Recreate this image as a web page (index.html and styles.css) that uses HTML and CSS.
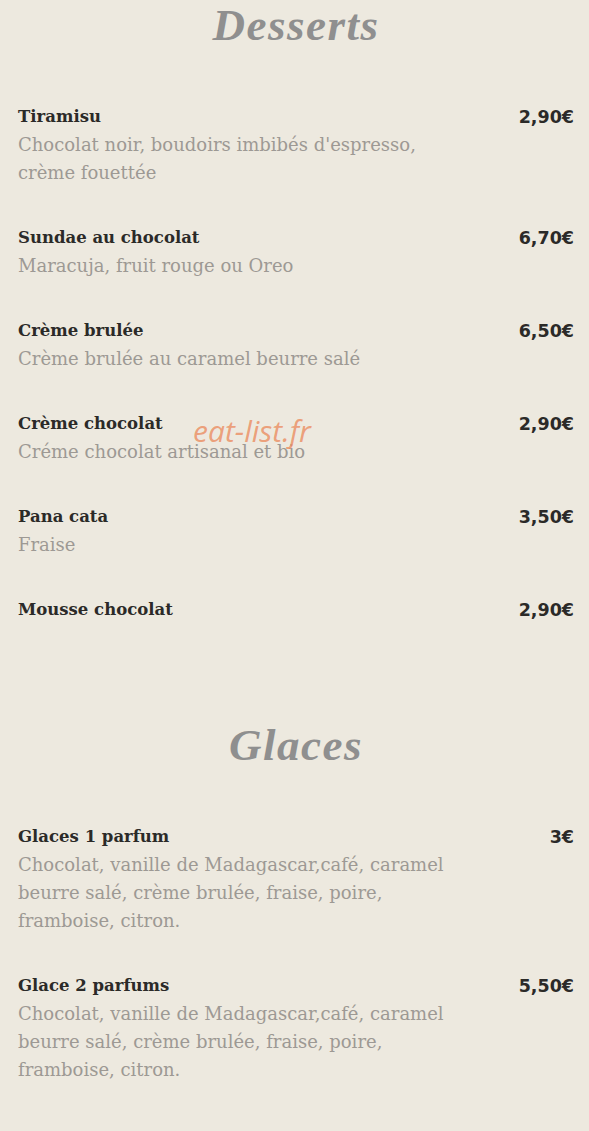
FILE: index.html
```html
<!DOCTYPE html>
<html lang="fr">
<head>
<meta charset="utf-8">
<title>Desserts</title>
<link rel="stylesheet" href="styles.css">
</head>
<body>
<div class="menu">
  <section class="section">
    <h2 class="section-title">Desserts</h2>
    <div class="items">
      <div class="item">
        <div class="item-text">
          <div class="item-name">Tiramisu</div>
          <div class="item-desc">Chocolat noir, boudoirs imbibés d'espresso, crème fouettée</div>
        </div>
        <div class="item-price">2,90€</div>
      </div>
      <div class="item">
        <div class="item-text">
          <div class="item-name">Sundae au chocolat</div>
          <div class="item-desc">Maracuja, fruit rouge ou Oreo</div>
        </div>
        <div class="item-price">6,70€</div>
      </div>
      <div class="item">
        <div class="item-text">
          <div class="item-name">Crème brulée</div>
          <div class="item-desc">Crème brulée au caramel beurre salé</div>
        </div>
        <div class="item-price">6,50€</div>
      </div>
      <div class="item">
        <div class="item-text">
          <div class="item-name">Crème chocolat</div>
          <div class="item-desc">Créme chocolat artisanal et bio</div>
        </div>
        <div class="item-price">2,90€</div>
        <div class="watermark">eat-list.fr</div>
      </div>
      <div class="item">
        <div class="item-text">
          <div class="item-name">Pana cata</div>
          <div class="item-desc">Fraise</div>
        </div>
        <div class="item-price">3,50€</div>
      </div>
      <div class="item">
        <div class="item-text">
          <div class="item-name">Mousse chocolat</div>
        </div>
        <div class="item-price">2,90€</div>
      </div>
    </div>
  </section>
  <section class="section">
    <h2 class="section-title">Glaces</h2>
    <div class="items">
      <div class="item">
        <div class="item-text">
          <div class="item-name">Glaces 1 parfum</div>
          <div class="item-desc">Chocolat, vanille de Madagascar,café, caramel beurre salé, crème brulée, fraise, poire, framboise, citron.</div>
        </div>
        <div class="item-price">3€</div>
      </div>
      <div class="item">
        <div class="item-text">
          <div class="item-name">Glace 2 parfums</div>
          <div class="item-desc">Chocolat, vanille de Madagascar,café, caramel beurre salé, crème brulée, fraise, poire, framboise, citron.</div>
        </div>
        <div class="item-price">5,50€</div>
      </div>
    </div>
  </section>
</div>
</body>
</html>
```
FILE: styles.css
```css
html, body {
  margin: 0;
  padding: 0;
  background: #ede9df;
}
.menu {
  padding: 0 15px 0 18px;
}
.section-title {
  margin: 0;
  text-align: center;
  font-family: "Liberation Serif", serif;
  font-style: italic;
  font-weight: bold;
  font-size: 45px;
  letter-spacing: 1.5px;
  line-height: 50px;
  color: #8f8f8f;
}
.items {
  display: flex;
  flex-direction: column;
  gap: 37px;
  padding-top: 53px;
}
.section + .section {
  padding-top: 96px;
}
.item {
  position: relative;
  display: flex;
  justify-content: space-between;
  align-items: flex-start;
}
.item-text {
  max-width: 440px;
}
.item-name {
  font-family: "DejaVu Serif", serif;
  font-weight: bold;
  font-size: 16.5px;
  line-height: 28px;
  color: #2b2a28;
}
.item-desc {
  font-family: "DejaVu Serif", serif;
  font-size: 18px;
  line-height: 28px;
  color: #9d9994;
}
.item-price {
  font-family: "DejaVu Sans", sans-serif;
  font-weight: 700;
  font-size: 17.5px;
  line-height: 28px;
  color: #2b2a28;
}
.watermark {
  position: absolute;
  left: 175px;
  top: 4px;
  font-family: "Open Sans", sans-serif;
  font-style: italic;
  font-size: 30px;
  line-height: 34px;
  color: rgba(235, 140, 95, 0.8);
  pointer-events: none;
}
```
